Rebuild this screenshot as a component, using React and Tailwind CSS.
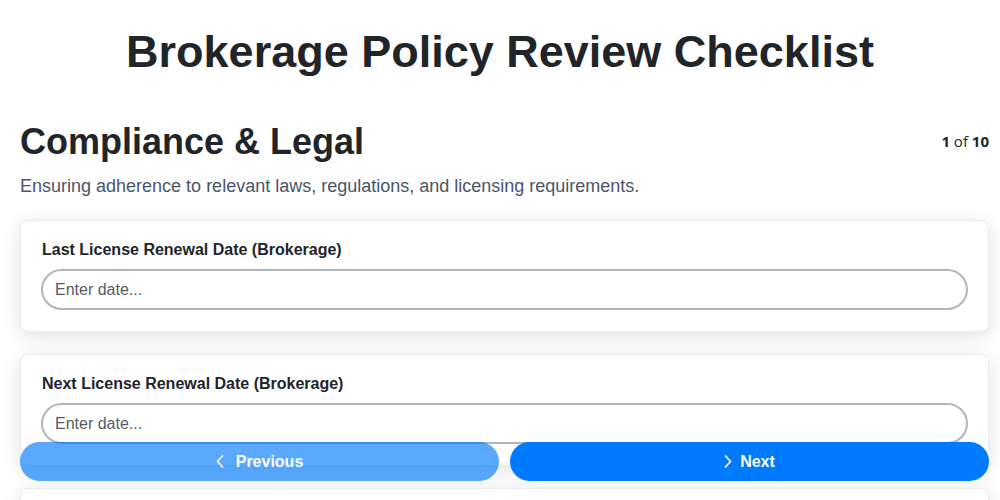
const fields = [
    'Last License Renewal Date (Brokerage)',
    'Next License Renewal Date (Brokerage)',
    'License Number (Brokerage)',
    'Errors & Omissions Insurance Expiry',
]

function Chevron({ dir }) {
    return (
        <svg width="8" height="13" viewBox="0 0 8 13" fill="none" stroke="currentColor" strokeWidth="1.7" strokeLinecap="round" strokeLinejoin="round">
            {dir === 'left' ? <path d="M6.5 1 1.5 6.5 6.5 12" /> : <path d="M1.5 1 6.5 6.5 1.5 12" />}
        </svg>
    )
}

function FieldCard({ label }) {
    return (
        <div className="bg-white border border-[#e9ecef] rounded-lg shadow-[0_4px_20px_rgba(0,0,0,0.12)] px-5 pt-[17px] pb-[21px]">
            <label className="block text-base leading-6 font-bold text-[#212529] mb-[7px] pl-px">{label}</label>
            <input
                type="text"
                placeholder="Enter date..."
                className="w-full h-[41px] px-3 text-base border-2 border-[#adb5bd] rounded-full bg-white text-[#212529] placeholder:text-[#555c66] outline-none"
            />
        </div>
    )
}

export default function App() {
    return (
        <div className="min-h-screen bg-white text-[#212529] font-['Liberation_Sans',Arial,sans-serif]">
            <h1 className="pt-[25px] text-[45px] leading-[1.2] font-bold text-center text-[#212529]">
                Brokerage Policy Review Checklist
            </h1>

            <div className="pl-5 pr-[11px] pb-32">
                <div className="mt-[41px] flex items-center justify-between">
                    <h2 className="text-[36px] leading-[1.2] font-bold">Compliance &amp; Legal</h2>
                    <span className="text-[15px] font-['Open_Sans','Noto_Sans',sans-serif]">
                        <b>1</b> of <b>10</b>
                    </span>
                </div>
                <p className="mt-[10px] text-lg leading-[27px] text-[#4a5568]">
                    Ensuring adherence to relevant laws, regulations, and licensing requirements.
                </p>

                <div className="mt-[20px] flex flex-col gap-[22px]">
                    {fields.map(f => <FieldCard key={f} label={f} />)}
                </div>
            </div>

            <div className="fixed left-5 right-[11px] bottom-[19px] grid grid-cols-2 gap-[11px]">
                <button
                    disabled
                    className="h-[39px] rounded-full bg-[#007bff] opacity-65 text-white font-bold text-base flex items-center justify-center gap-3"
                >
                    <Chevron dir="left" />
                    Previous
                </button>
                <button className="h-[39px] rounded-full bg-[#007bff] text-white font-bold text-base flex items-center justify-center gap-2">
                    <Chevron dir="right" />
                    Next
                </button>
            </div>
        </div>
    )
}
